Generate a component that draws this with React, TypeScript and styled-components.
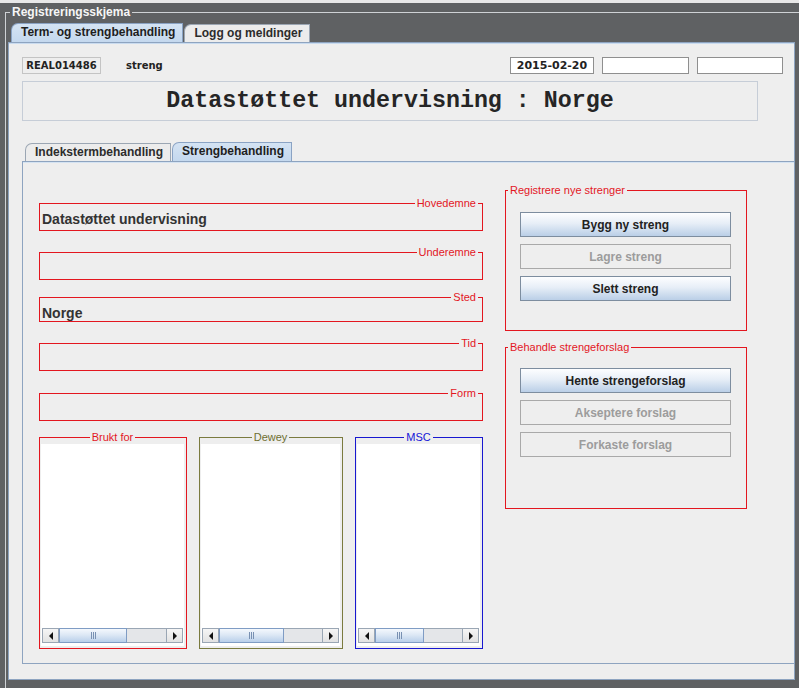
import styled, { createGlobalStyle } from "styled-components";

const GlobalStyle = createGlobalStyle`
  html, body {
    margin: 0;
    padding: 0;
    background: #e8e8e8;
    overflow: hidden;
  }
  body {
    font-family: "Liberation Sans", Arial, sans-serif;
  }
  fieldset, legend {
    box-sizing: border-box;
  }
`;

const RED = "#e3161f";

const Frame = styled.div`
  margin-top: 3px;
  height: 685px;
  padding: 2px 0 0 5px;
  box-sizing: border-box;
  background: #5f6163;
  overflow: hidden;
`;

const OuterSet = styled.fieldset`
  margin: 0;
  width: 810px;
  height: 720px;
  min-width: 0;
  padding: 4px 0 0 2px;
  border: 1px solid #cfd2d5;
`;

const OuterLegend = styled.legend`
  margin-left: 2px;
  padding: 0 2px;
  font: bold 12px/14px "Liberation Sans", Arial, sans-serif;
  color: #f6f6f6;
`;

const TabStrip = styled.div<{ $inset: number; $top?: number }>`
  display: flex;
  align-items: flex-end;
  height: 19px;
  margin-top: ${(p) => p.$top ?? 0}px;
  padding-left: ${(p) => p.$inset}px;
`;

const Tab = styled.div<{ $active?: boolean }>`
  box-sizing: border-box;
  height: ${(p) => (p.$active ? 19 : 18)}px;
  padding: 0 7px 0 9px;
  margin-right: 1px;
  border: 1px solid ${(p) => (p.$active ? "#8aa3c4" : "#9ba6b3")};
  border-bottom: none;
  border-top-left-radius: 7px;
  background: ${(p) =>
    p.$active ? "linear-gradient(#d4e3f3, #c4d8ee)" : "#ececec"};
  font: bold 12px/17px "Liberation Sans", Arial, sans-serif;
  color: ${(p) => (p.$active ? "#1e1e1e" : "#2c2c2c")};
  white-space: nowrap;
`;

const TabBody = styled.div`
  box-sizing: border-box;
  width: 787px;
  height: 638px;
  padding: 14px 0 0 13px;
  border: 1px solid #8ea4c0;
  box-shadow: inset 0 1px 0 #c9dbef;
  background: #eeeeee;
`;

const TopRow = styled.div`
  display: flex;
  align-items: center;
  height: 17px;
  padding-right: 11px;
`;

const IdBox = styled.div`
  box-sizing: border-box;
  width: 79px;
  height: 17px;
  border: 1px solid #c4c4c4;
  display: flex;
  align-items: center;
  justify-content: center;
  font: bold 10px "DejaVu Sans", Verdana, sans-serif;
  color: #222;
`;

const TypeLabel = styled.span`
  margin-left: 25px;
  font: bold 10px "DejaVu Sans", Verdana, sans-serif;
  color: #222;
`;

const Spacer = styled.div`
  flex: 1;
`;

const ValueBox = styled.div<{ $w: number }>`
  box-sizing: border-box;
  width: ${(p) => p.$w}px;
  height: 17px;
  margin-left: 8px;
  border: 1px solid #8f8f8f;
  background: #ffffff;
  display: flex;
  align-items: center;
  justify-content: center;
  font: bold 11px "DejaVu Sans", Verdana, sans-serif;
  color: #222;
`;

const TitleBox = styled.div`
  box-sizing: border-box;
  width: 736px;
  height: 40px;
  margin-top: 7px;
  border: 1px solid #c6cdd7;
  display: flex;
  align-items: center;
  justify-content: center;
  font: bold 23.3px "Liberation Mono", "Courier New", monospace;
  color: #252525;
`;

const InnerPanel = styled.div`
  box-sizing: border-box;
  height: 503px;
  padding: 22px 0 0 16px;
  border: 1px solid #8ea4c0;
  border-right: none;
  box-shadow: inset 0 1px 0 #d5e3f2;
  display: flex;
  align-items: flex-start;
  gap: 22px;
`;

const LeftColumn = styled.div`
  width: 444px;
  margin-top: 13px;
  display: flex;
  flex-direction: column;
`;

const RightColumn = styled.div`
  width: 242px;
  display: flex;
  flex-direction: column;
  gap: 10px;
`;

const TitledSet = styled.fieldset<{ $h: number; $color?: string; $gap?: number }>`
  margin: ${(p) => p.$gap ?? 0}px 0 0 0;
  padding: 0;
  min-width: 0;
  height: ${(p) => p.$h}px;
  border: 1px solid ${(p) => p.$color ?? RED};
`;

const Legend = styled.legend<{ $align: "left" | "right" | "center"; $color?: string }>`
  padding: 0 2px;
  margin-left: ${(p) => (p.$align === "left" ? "2px" : "auto")};
  margin-right: ${(p) => (p.$align === "right" ? "4px" : p.$align === "center" ? "auto" : "0")};
  font: 11px/12px "Liberation Sans", Tahoma, sans-serif;
  color: ${(p) => p.$color ?? RED};
`;

const FieldValue = styled.div`
  padding: 2px 0 0 2px;
  font: bold 14px/16px "Liberation Sans", Tahoma, sans-serif;
  color: #333;
`;

const ListsRow = styled.div`
  display: flex;
  gap: 12px;
  margin-top: 10px;
`;

const ListSet = styled(TitledSet)<{ $w: number }>`
  width: ${(p) => p.$w}px;
  padding: 1px 2px 2px 1px;
`;

const ListArea = styled.div`
  box-sizing: border-box;
  height: 202px;
  padding: 0 1px 3px 1px;
  background: #ffffff;
  display: flex;
  flex-direction: column;
  justify-content: flex-end;
`;

const ScrollBar = styled.div`
  display: flex;
  height: 15px;
  box-sizing: border-box;
  border: 1px solid #9aa6b4;
  background: #e4e6e9;
`;

const ArrowButton = styled.div<{ $dir: "left" | "right" }>`
  width: 15px;
  flex: none;
  display: flex;
  align-items: center;
  justify-content: center;
  background: linear-gradient(#f6f6f6, #e2e2e2);
  border-${(p) => (p.$dir === "left" ? "right" : "left")}: 1px solid #9aa6b4;

  &::before {
    content: "";
    border-top: 4px solid transparent;
    border-bottom: 4px solid transparent;
    border-${(p) => (p.$dir === "left" ? "right" : "left")}: 4px solid #111;
  }
`;

const Track = styled.div`
  flex: 1;
  display: flex;
`;

const Thumb = styled.div<{ $ratio: number }>`
  box-sizing: border-box;
  width: ${(p) => p.$ratio}%;
  margin: -1px 0;
  border: 1px solid #7f9cc4;
  background: linear-gradient(#f4f8fd, #dde8f5 45%, #b9cfea);
  display: flex;
  align-items: center;
  justify-content: center;
`;

const Grip = styled.span`
  width: 5px;
  height: 7px;
  background: linear-gradient(to right, #7890b2 1px, transparent 1px) 0 0 / 2px 100%;
`;

const ButtonStack = styled.div<{ $top: number }>`
  display: flex;
  flex-direction: column;
  gap: 7px;
  padding: ${(p) => p.$top}px 15px 0 14px;
`;

const ActionButton = styled.button`
  box-sizing: border-box;
  width: 211px;
  height: 25px;
  padding: 0;
  border: 1px solid #7d8d9f;
  border-radius: 0;
  background: linear-gradient(#fdfeff, #e7eef7 45%, #bacfe7);
  font: bold 12px "Liberation Sans", Arial, sans-serif;
  color: #222;

  &:disabled {
    border-color: #a9a9a9;
    background: #eeeeee;
    color: #9c9c9c;
  }
`;

const fields = [
  { title: "Hovedemne", value: "Datastøttet undervisning", h: 34, gap: 0 },
  { title: "Underemne", value: "", h: 34, gap: 15 },
  { title: "Sted", value: "Norge", h: 31, gap: 11 },
  { title: "Tid", value: "", h: 34, gap: 15 },
  { title: "Form", value: "", h: 34, gap: 16 },
];

const lists = [
  { title: "Brukt for", color: RED, text: RED, w: 148, thumb: 64 },
  { title: "Dewey", color: "#7a7a3e", text: "#6e6e30", w: 144, thumb: 63 },
  { title: "MSC", color: "#1818d0", text: "#1515d8", w: 128, thumb: 56 },
];

export default function App() {
  return (
    <>
      <GlobalStyle />
      <Frame>
        <OuterSet>
          <OuterLegend>Registreringsskjema</OuterLegend>
          <TabStrip $inset={3}>
            <Tab $active>Term- og strengbehandling</Tab>
            <Tab>Logg og meldinger</Tab>
          </TabStrip>
          <TabBody>
            <TopRow>
              <IdBox>REAL014486</IdBox>
              <TypeLabel>streng</TypeLabel>
              <Spacer />
              <ValueBox $w={84}>2015-02-20</ValueBox>
              <ValueBox $w={87} />
              <ValueBox $w={86} />
            </TopRow>
            <TitleBox>Datastøttet undervisning : Norge</TitleBox>
            <TabStrip $inset={3} $top={21}>
              <Tab>Indekstermbehandling</Tab>
              <Tab $active>Strengbehandling</Tab>
            </TabStrip>
            <InnerPanel>
              <LeftColumn>
                {fields.map((f) => (
                  <TitledSet key={f.title} $h={f.h} $gap={f.gap}>
                    <Legend $align="right">{f.title}</Legend>
                    <FieldValue>{f.value}</FieldValue>
                  </TitledSet>
                ))}
                <ListsRow>
                  {lists.map((l) => (
                    <ListSet key={l.title} $h={218} $w={l.w} $color={l.color}>
                      <Legend $align="center" $color={l.text}>
                        {l.title}
                      </Legend>
                      <ListArea>
                        <ScrollBar>
                          <ArrowButton $dir="left" />
                          <Track>
                            <Thumb $ratio={l.thumb}>
                              <Grip />
                            </Thumb>
                          </Track>
                          <ArrowButton $dir="right" />
                        </ScrollBar>
                      </ListArea>
                    </ListSet>
                  ))}
                </ListsRow>
              </LeftColumn>
              <RightColumn>
                <TitledSet $h={147}>
                  <Legend $align="left">Registrere nye strenger</Legend>
                  <ButtonStack $top={16}>
                    <ActionButton>Bygg ny streng</ActionButton>
                    <ActionButton disabled>Lagre streng</ActionButton>
                    <ActionButton>Slett streng</ActionButton>
                  </ButtonStack>
                </TitledSet>
                <TitledSet $h={168}>
                  <Legend $align="left">Behandle strengeforslag</Legend>
                  <ButtonStack $top={15}>
                    <ActionButton>Hente strengeforslag</ActionButton>
                    <ActionButton disabled>Akseptere forslag</ActionButton>
                    <ActionButton disabled>Forkaste forslag</ActionButton>
                  </ButtonStack>
                </TitledSet>
              </RightColumn>
            </InnerPanel>
          </TabBody>
        </OuterSet>
      </Frame>
    </>
  );
}
